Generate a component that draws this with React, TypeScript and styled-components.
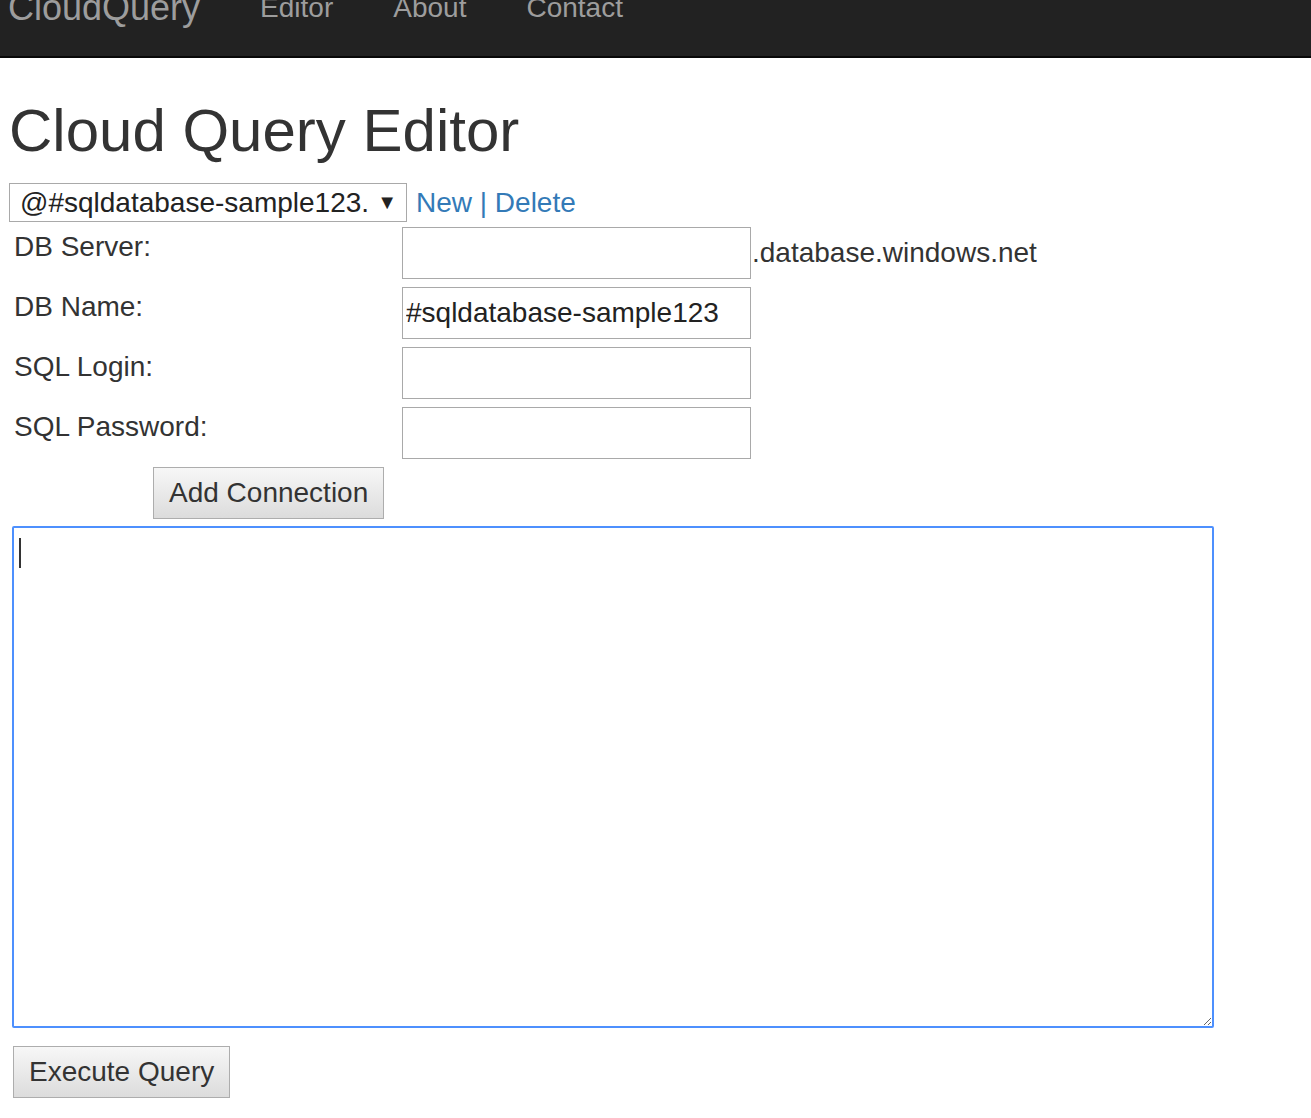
import React from 'react';
import styled, { createGlobalStyle } from 'styled-components';

const GlobalStyle = createGlobalStyle`
  html, body {
    margin: 0;
    padding: 0;
    background: #fff;
  }
  body {
    font-family: "Liberation Sans", Arial, sans-serif;
    color: #333;
  }
  * {
    box-sizing: border-box;
  }
`;

const Navbar = styled.nav`
  height: 58px;
  background: #222;
  border-bottom: 2px solid #080808;
  overflow: hidden;
`;

const NavInner = styled.div`
  display: flex;
  align-items: flex-start;
  margin-top: -12px;
  padding-left: 8px;
`;

const Brand = styled.a`
  font-size: 36px;
  line-height: 40px;
  color: #9d9d9d;
  padding-right: 30px;
  text-decoration: none;
`;

const NavLink = styled.a`
  font-size: 28px;
  line-height: 40px;
  color: #9d9d9d;
  padding: 0 30px;
  text-decoration: none;
`;

// Body
const Container = styled.main`
  padding: 0 0 20px 9px;
`;

const Title = styled.h1`
  font-size: 60px;
  font-weight: 500;
  line-height: 66px;
  margin: 40px 0 19px 0;
  color: #333;
`;

const ConnectionRow = styled.div`
  display: flex;
  align-items: center;
  gap: 9px;
  height: 39px;
`;

const SelectBox = styled.div`
  display: flex;
  align-items: center;
  justify-content: space-between;
  width: 398px;
  height: 39px;
  border: 1px solid #a9a9a9;
  padding: 0 9px 0 10px;
  font-size: 28px;
  color: #222;
  background: #fff;
`;

const Arrow = styled.span`
  font-size: 20px;
  color: #222;
`;

const LinkText = styled.span`
  font-size: 28px;
  line-height: 40px;
  color: #337ab7;
`;

const FormGrid = styled.div`
  display: grid;
  grid-template-columns: 388px auto;
  row-gap: 8px;
  margin-top: 5px;
  padding-left: 5px;
`;

const Label = styled.label`
  font-size: 28px;
  line-height: 40px;
  color: #333;
  align-self: start;
`;

const FieldCell = styled.div`
  display: flex;
  align-items: center;
`;

const TextInput = styled.input`
  width: 349px;
  height: 52px;
  border: 1px solid #a9a9a9;
  padding: 0 3px;
  font-family: "Liberation Sans", Arial, sans-serif;
  font-size: 28px;
  color: #222;
  outline: none;
`;

const Suffix = styled.span`
  font-size: 28px;
  color: #333;
  margin-left: 1px;
`;

const Button = styled.button<{ $indent?: number; $top?: number }>`
  display: block;
  height: 52px;
  margin: ${(p) => p.$top ?? 0}px 0 0 ${(p) => p.$indent ?? 0}px;
  padding: 0 15px;
  border: 1px solid #adadad;
  border-radius: 0;
  background: linear-gradient(#f7f7f7, #dcdcdc);
  font-family: "Liberation Sans", Arial, sans-serif;
  font-size: 28px;
  color: #333;
`;

const EditorWrap = styled.div`
  position: relative;
  width: 1202px;
  margin: 7px 0 0 3px;
`;

const QueryArea = styled.textarea`
  display: block;
  width: 1202px;
  height: 502px;
  border: 2px solid #4d90fe;
  border-radius: 2px;
  outline: none;
  padding: 8px;
  font-family: "Liberation Sans", Arial, sans-serif;
  font-size: 28px;
  color: #333;
  resize: both;
`;

const Caret = styled.span`
  position: absolute;
  left: 7px;
  top: 12px;
  width: 2px;
  height: 30px;
  background: #333;
`;

const ExecuteWrap = styled.div`
  margin-top: 18px;
  padding-left: 4px;
`;

const fields = [
  { label: 'DB Server:', value: '', suffix: '.database.windows.net' },
  { label: 'DB Name:', value: '#sqldatabase-sample123' },
  { label: 'SQL Login:', value: '' },
  { label: 'SQL Password:', value: '', type: 'password' },
];

export default function App() {
  return (
    <>
      <GlobalStyle />
      <Navbar>
        <NavInner>
          <Brand>CloudQuery</Brand>
          <NavLink>Editor</NavLink>
          <NavLink>About</NavLink>
          <NavLink>Contact</NavLink>
        </NavInner>
      </Navbar>
      <Container>
        <Title>Cloud Query Editor</Title>
        <ConnectionRow>
          <SelectBox>
            <span>@#sqldatabase-sample123.</span>
            <Arrow>▼</Arrow>
          </SelectBox>
          <LinkText>New | Delete</LinkText>
        </ConnectionRow>
        <FormGrid>
          {fields.map((f) => (
            <React.Fragment key={f.label}>
              <Label>{f.label}</Label>
              <FieldCell>
                <TextInput type={f.type ?? 'text'} defaultValue={f.value} />
                {f.suffix && <Suffix>{f.suffix}</Suffix>}
              </FieldCell>
            </React.Fragment>
          ))}
        </FormGrid>
        <Button $indent={144} $top={8}>Add Connection</Button>
        <EditorWrap>
          <QueryArea />
          <Caret />
        </EditorWrap>
        <ExecuteWrap>
          <Button>Execute Query</Button>
        </ExecuteWrap>
      </Container>
    </>
  );
}
